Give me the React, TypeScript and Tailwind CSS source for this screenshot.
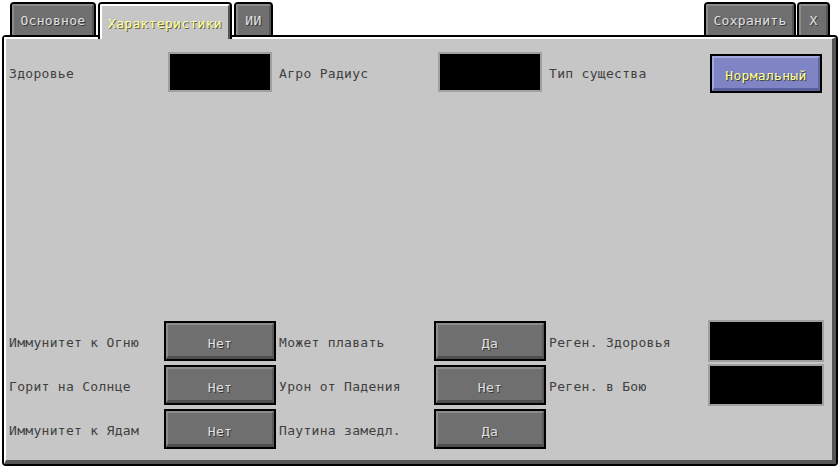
import React from "react";

const font = "font-['DejaVu_Sans_Mono',monospace] text-[13px] tracking-[0.3px]";

function Tab({ label, width }: { label: string; width: string }) {
  return (
    <div className={`${width} h-[33px] rounded-t-[4px] border-2 border-b-0 border-black bg-[#6f6f6f]`}>
      <div className="flex h-full items-start justify-center rounded-t-[2px] border-t-2 border-l-2 border-r-2 border-t-[#8b8b8b] border-l-[#8b8b8b] border-r-[#555555] pt-[5px] text-[#e0e0e0] [text-shadow:1px_1px_0_#383838]">
        {label}
      </div>
    </div>
  );
}

function ActiveTab({ label }: { label: string }) {
  return (
    <div className="relative z-10 mb-[-4px] h-[37px] w-[134px] rounded-t-[4px] border-2 border-b-0 border-black bg-[#c6c6c6]">
      <div className="flex h-full items-start justify-center rounded-t-[2px] border-t-2 border-l-2 border-r-2 border-t-white border-l-white border-r-[#555555] pt-[8px] text-[#ffffa0] [text-shadow:1px_1px_0_#5f5f3f]">
        {label}
      </div>
    </div>
  );
}

function Field({ wide }: { wide?: boolean }) {
  return (
    <div
      className={
        wide
          ? "h-[42px] w-[116px] shrink-0 border-2 border-[#a0a0a0] bg-black"
          : "h-[40px] w-[104px] shrink-0 border-2 border-[#a0a0a0] bg-black"
      }
    />
  );
}

function McButton({ label }: { label: string }) {
  return (
    <div className="h-[40px] w-[112px] shrink-0 border-2 border-black bg-[#6f6f6f]">
      <div className="flex h-full items-center justify-center border-t-2 border-l-2 border-r-2 border-b-[3px] border-t-[#8c8c8c] border-l-[#8c8c8c] border-r-[#5a5a5a] border-b-[#4e4e4e] pt-[6px] text-[#e0e0e0] [text-shadow:1px_1px_0_#383838]">
        {label}
      </div>
    </div>
  );
}

function BlueButton({ label }: { label: string }) {
  return (
    <div className="mt-[2px] h-[39px] w-[112px] shrink-0 border-2 border-black bg-[#7f84c4]">
      <div className="flex h-full items-center justify-center border-t-2 border-l-2 border-r-2 border-b-[3px] border-t-[#a4a8e0] border-l-[#a4a8e0] border-r-[#6268a6] border-b-[#5a5f9c] pt-[5px] text-[#ffffa0] [text-shadow:1px_1px_0_#3f3f28]">
        {label}
      </div>
    </div>
  );
}

const rows: [string, string, string, string, string | null][] = [
  ["Иммунитет к Огню", "Нет", "Может плавать", "Да", "Реген. Здоровья"],
  ["Горит на Солнце", "Нет", "Урон от Падения", "Нет", "Реген. в Бою"],
  ["Иммунитет к Ядам", "Нет", "Паутина замедл.", "Да", null],
];

export default function App() {
  return (
    <div className={`flex h-[468px] w-[840px] flex-col overflow-hidden bg-white ${font}`}>
      {/* Tabs */}
      <div className="flex h-[35px] shrink-0 items-end px-[10px]">
        <div className="flex items-end gap-[2px]">
          <Tab label="Основное" width="w-[86px]" />
          <ActiveTab label="Характеристики" />
          <Tab label="ИИ" width="w-[39px]" />
        </div>
        <div className="ml-auto flex items-end gap-[1px]">
          <Tab label="Сохранить" width="w-[92px]" />
          <Tab label="X" width="w-[33px]" />
        </div>
      </div>

      {/* Panel */}
      <div className="mx-[2px] h-[431px] shrink-0 rounded-[4px] border-2 border-black">
        <div className="flex h-full flex-col border-t-2 border-l-2 border-r-4 border-b-4 border-t-white border-l-white border-r-[#555555] border-b-[#555555] bg-[#c6c6c6] pl-[3px] pt-[13px] pb-[11px] text-[#404040]">
          <div className="flex items-start">
            <div className="flex h-[40px] w-[270px] shrink-0 items-center">
              <span className="w-[159px] shrink-0 pt-[3px]">Здоровье</span>
              <Field />
            </div>
            <div className="flex h-[40px] w-[270px] shrink-0 items-center">
              <span className="w-[159px] shrink-0 pt-[3px]">Агро Радиус</span>
              <Field />
            </div>
            <div className="flex flex-1 items-start">
              <span className="flex h-[40px] w-[161px] shrink-0 items-center pt-[3px]">Тип существа</span>
              <BlueButton label="Нормальный" />
            </div>
          </div>

          <div className="mt-auto flex flex-col gap-[4px]">
            {rows.map(([l1, v1, l2, v2, l3]) => (
              <div key={l1} className="flex h-[40px] items-center">
                <div className="flex w-[270px] shrink-0 items-center">
                  <span className="w-[155px] shrink-0 pt-[3px]">{l1}</span>
                  <McButton label={v1} />
                </div>
                <div className="flex w-[270px] shrink-0 items-center">
                  <span className="w-[155px] shrink-0 pt-[3px]">{l2}</span>
                  <McButton label={v2} />
                </div>
                {l3 && (
                  <div className="flex flex-1 items-center">
                    <span className="w-[159px] shrink-0 pt-[3px]">{l3}</span>
                    <Field wide />
                  </div>
                )}
              </div>
            ))}
          </div>
        </div>
      </div>
    </div>
  );
}
